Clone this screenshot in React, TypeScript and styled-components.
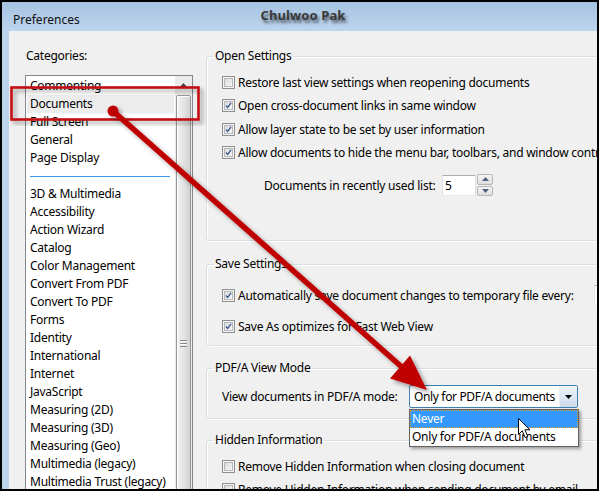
import React from "react";
import styled, { createGlobalStyle } from "styled-components";

const Global = createGlobalStyle`
  html, body { margin: 0; padding: 0; background: #fff; }
  body {
    font-family: "Noto Sans", "Open Sans", sans-serif;
    font-size: 12px;
    letter-spacing: -0.25px;
    color: #000;
  }
  * { box-sizing: border-box; }
`;

const Frame = styled.div`
  position: relative;
  width: 599px;
  height: 491px;
  border: 2px solid #000;
  display: flex;
  flex-direction: column;
  overflow: hidden;
`;

const TitleBar = styled.div`
  flex: none;
  height: 29px;
  display: grid;
  grid-template-columns: 1fr auto 1fr;
  align-items: start;
  padding-left: 11px;
  background: linear-gradient(#a7c3e2, #bdd5ed);
`;

const Caption = styled.div`
  margin-top: 10px;
  line-height: 16px;
  letter-spacing: 0;
  color: #111;
`;

const Owner = styled.div`
  margin-top: 5px;
  margin-right: 4px;
  line-height: 16px;
  font-size: 13px;
  font-weight: 700;
  letter-spacing: 0.1px;
  color: #3a3a3a;
  text-shadow: 2px 3px 3px rgba(0, 0, 0, 0.55);
`;

const Body = styled.div`
  flex: 1;
  display: flex;
  min-height: 0;
`;

const SideFrame = styled.div`
  flex: none;
  width: 7px;
  background: #bcd4ec;
`;

const Content = styled.div`
  flex: 1;
  display: flex;
  align-items: flex-start;
  padding-top: 17px;
  background: #f0f0f0;
  overflow: hidden;
`;

const LeftPane = styled.div`
  flex: none;
  width: 184px;
  padding-left: 16px;
  display: flex;
  flex-direction: column;
`;

const PaneLabel = styled.div`
  line-height: 16px;
  padding-left: 1px;
  margin-bottom: 11px;
`;

const ListBox = styled.div`
  width: 168px;
  height: 480px;
  border: 1px solid #828790;
  background: #fff;
  display: flex;
`;

const Items = styled.div`
  flex: 1;
  padding-top: 1px;
  display: flex;
  flex-direction: column;
`;

const Item = styled.div<{ $sel?: boolean }>`
  height: 18px;
  line-height: 18px;
  padding-left: 3px;
  margin: 0 1px;
  white-space: nowrap;
  background: ${(p) => (p.$sel ? "#ececec" : "transparent")};
`;

const Separator = styled.div`
  height: 18px;
  display: flex;
  align-items: center;
  padding: 0 5px 0 4px;
  &::after {
    content: "";
    flex: 1;
    height: 1px;
    background: #3c9ae8;
  }
`;

const ScrollBar = styled.div`
  flex: none;
  width: 17px;
  background: #ebebeb;
  display: flex;
  flex-direction: column;
  align-items: center;
`;

const ScrollBtn = styled.div`
  flex: none;
  height: 17px;
  width: 17px;
  display: flex;
  align-items: center;
  justify-content: center;
`;

const Thumb = styled.div`
  flex: none;
  margin-top: 2px;
  width: 15px;
  height: 500px;
  border: 1px solid #979797;
  border-radius: 2px;
  background: linear-gradient(90deg, #f3f3f3 0%, #e6e6e6 45%, #d2d2d2 100%);
  box-shadow: inset 1px 1px 0 #fff;
  display: flex;
  justify-content: center;
  padding-top: 244px;
`;

const Grip = styled.div`
  width: 7px;
  height: 7px;
  background: repeating-linear-gradient(#8a8a8a 0 1px, #fafafa 1px 2px, transparent 2px 3px);
`;

const RightPane = styled.div`
  flex: none;
  width: 560px;
  margin-left: 13px;
  display: flex;
  flex-direction: column;
`;

const Group = styled.fieldset<{ $mt: number; $pt: number; $pb: number }>`
  margin: ${(p) => p.$mt}px 0 0 0;
  padding: ${(p) => p.$pt}px 0 ${(p) => p.$pb}px 6px;
  border: 1px solid #d5dfe5;
  border-radius: 3px;
  box-shadow: inset 1px 1px 0 #fff, 1px 1px 0 #fff;
  min-width: 0;
`;

const Legend = styled.legend`
  padding: 0 2px;
  line-height: 16px;
`;

const Rows = styled.div`
  padding-left: 9px;
  display: flex;
  flex-direction: column;
`;

const CheckRow = styled.label<{ $h: number }>`
  height: ${(p) => p.$h}px;
  display: flex;
  align-items: center;
  gap: 2px;
  white-space: nowrap;
`;

const BoxWrap = styled.span`
  flex: none;
  width: 13px;
  height: 13px;
  border: 1px solid #8e8f8f;
  background: #f4f4f4;
  display: flex;
  align-items: center;
  justify-content: center;
  margin-right: 1px;
`;

const BoxInner = styled.span`
  width: 9px;
  height: 9px;
  border: 1px solid #b8b8b8;
  background: linear-gradient(135deg, #dcdcdc, #f6f6f6);
  display: flex;
  align-items: center;
  justify-content: center;
`;

const Check = ({ on }: { on?: boolean }) => (
  <BoxWrap>
    <BoxInner>
      {on && (
        <svg width="9" height="9" viewBox="0 0 9 9">
          <path d="M1.2 4.6 L3.4 6.9 L7.8 1.2" fill="none" stroke="#3d5a93" strokeWidth="1.8" />
        </svg>
      )}
    </BoxInner>
  </BoxWrap>
);

const SpinRow = styled.div`
  margin-top: 10px;
  margin-left: 42px;
  height: 22px;
  display: grid;
  grid-template-columns: 178px 35px auto;
  align-items: center;
`;

const TextBox = styled.div<{ $w: number }>`
  width: ${(p) => p.$w}px;
  height: 21px;
  border: 1px solid;
  border-color: #abadb3 #dbdfe6 #e3e9ef #e2e3ea;
  background: #fff;
  padding-left: 2px;
  line-height: 19px;
`;

const Spinner = styled.div`
  width: 16px;
  height: 22px;
  display: flex;
  flex-direction: column;
  gap: 1px;
`;

const SpinBtn = styled.div`
  flex: 1;
  border: 1px solid #b5b5b5;
  border-radius: 2px;
  background: linear-gradient(#f5f5f5, #dedede);
  display: flex;
  align-items: center;
  justify-content: center;
`;

const Tri = ({ up }: { up?: boolean }) => (
  <svg width="7" height="4" viewBox="0 0 7 4">
    <path d={up ? "M0 4 L3.5 0 L7 4 Z" : "M0 0 L7 0 L3.5 4 Z"} fill="#4d6185" />
  </svg>
);

const FieldRow = styled.div<{ $cols: string; $h: number }>`
  height: ${(p) => p.$h}px;
  display: grid;
  grid-template-columns: ${(p) => p.$cols};
  align-items: center;
  white-space: nowrap;
`;

const Combo = styled.div`
  position: relative;
  width: 169px;
  height: 23px;
  border: 1px solid #3c7fb1;
  border-radius: 2px;
  background: #fff;
  display: flex;
  align-items: stretch;
`;

const ComboText = styled.div`
  flex: 1;
  padding-left: 4px;
  line-height: 21px;
  letter-spacing: -0.35px;
  white-space: nowrap;
  overflow: hidden;
`;

const ComboBtn = styled.div`
  flex: none;
  width: 18px;
  background: linear-gradient(#eef4fa, #dce7f2 50%, #cddbea);
  border-left: 1px solid #eaf0f6;
  display: flex;
  align-items: center;
  justify-content: center;
`;

const DropList = styled.div`
  position: absolute;
  top: 23px;
  left: -1px;
  width: 170px;
  border: 1px solid #646464;
  background: #fff;
  box-shadow: 2px 2px 3px rgba(0, 0, 0, 0.35);
  z-index: 2;
`;

const DropItem = styled.div<{ $hl?: boolean }>`
  height: 18px;
  line-height: 18px;
  padding-left: 2px;
  white-space: nowrap;
  color: ${(p) => (p.$hl ? "#fff" : "#000")};
  background: ${(p) => (p.$hl ? "#3399ff" : "transparent")};
  outline: ${(p) => (p.$hl ? "1px dotted #e09a3a" : "none")};
  outline-offset: -1px;
`;

const Overlay = styled.svg`
  position: absolute;
  top: -2px;
  left: -2px;
  width: 599px;
  height: 491px;
  pointer-events: none;
  z-index: 5;
`;

const categoriesTop = ["Commenting", "Documents", "Full Screen", "General", "Page Display"];
const categoriesBottom = [
  "3D & Multimedia",
  "Accessibility",
  "Action Wizard",
  "Catalog",
  "Color Management",
  "Convert From PDF",
  "Convert To PDF",
  "Forms",
  "Identity",
  "International",
  "Internet",
  "JavaScript",
  "Measuring (2D)",
  "Measuring (3D)",
  "Measuring (Geo)",
  "Multimedia (legacy)",
  "Multimedia Trust (legacy)",
  "Multimedia & 3D",
];

export default function App() {
  return (
    <>
      <Global />
      <Frame>
        <TitleBar>
          <Caption>Preferences</Caption>
          <Owner>Chulwoo Pak</Owner>
          <span />
        </TitleBar>
        <Body>
          <SideFrame />
          <Content>
            <LeftPane>
              <PaneLabel>Categories:</PaneLabel>
              <ListBox>
                <Items>
                  {categoriesTop.map((c) => (
                    <Item key={c} $sel={c === "Documents"}>
                      {c}
                    </Item>
                  ))}
                  <Separator />
                  {categoriesBottom.map((c) => (
                    <Item key={c}>{c}</Item>
                  ))}
                </Items>
                <ScrollBar>
                  <ScrollBtn>
                    <svg width="7" height="4" viewBox="0 0 7 4">
                      <path d="M0 4 L3.5 0 L7 4 Z" fill="#404040" />
                    </svg>
                  </ScrollBtn>
                  <Thumb>
                    <Grip />
                  </Thumb>
                </ScrollBar>
              </ListBox>
            </LeftPane>

            <RightPane>
              <Group $mt={0} $pt={7} $pb={44}>
                <Legend>Open Settings</Legend>
                <Rows>
                  <CheckRow $h={23}>
                    <Check />
                    Restore last view settings when reopening documents
                  </CheckRow>
                  <CheckRow $h={23}>
                    <Check on />
                    Open cross-document links in same window
                  </CheckRow>
                  <CheckRow $h={24}>
                    <Check on />
                    Allow layer state to be set by user information
                  </CheckRow>
                  <CheckRow $h={23}>
                    <Check on />
                    Allow documents to hide the menu bar, toolbars, and window controls
                  </CheckRow>
                  <SpinRow>
                    <span>Documents in recently used list:</span>
                    <TextBox $w={34}>5</TextBox>
                    <Spinner>
                      <SpinBtn>
                        <Tri up />
                      </SpinBtn>
                      <SpinBtn>
                        <Tri />
                      </SpinBtn>
                    </Spinner>
                  </SpinRow>
                </Rows>
              </Group>

              <Group $mt={15} $pt={8} $pb={3}>
                <Legend>Save Settings</Legend>
                <Rows>
                  <FieldRow $cols="372px auto" $h={31}>
                    <CheckRow $h={31}>
                      <Check on />
                      Automatically save document changes to temporary file every:
                    </CheckRow>
                    <TextBox $w={40}>5</TextBox>
                  </FieldRow>
                  <CheckRow $h={31}>
                    <Check on />
                    Save As optimizes for Fast Web View
                  </CheckRow>
                </Rows>
              </Group>

              <Group $mt={14} $pt={9} $pb={10}>
                <Legend>PDF/A View Mode</Legend>
                <Rows>
                  <FieldRow $cols="187px auto" $h={23}>
                    <span>View documents in PDF/A mode:</span>
                    <Combo>
                      <ComboText>Only for PDF/A documents</ComboText>
                      <ComboBtn>
                        <svg width="7" height="4" viewBox="0 0 7 4">
                          <path d="M0 0 L7 0 L3.5 4 Z" fill="#000" />
                        </svg>
                      </ComboBtn>
                      <DropList>
                        <DropItem $hl>Never</DropItem>
                        <DropItem>Only for PDF/A documents</DropItem>
                      </DropList>
                    </Combo>
                  </FieldRow>
                </Rows>
              </Group>

              <Group $mt={13} $pt={7} $pb={10}>
                <Legend>Hidden Information</Legend>
                <Rows>
                  <CheckRow $h={23}>
                    <Check />
                    Remove Hidden Information when closing document
                  </CheckRow>
                  <CheckRow $h={23}>
                    <Check />
                    Remove Hidden Information when sending document by email
                  </CheckRow>
                </Rows>
              </Group>
            </RightPane>
          </Content>
        </Body>

        <Overlay viewBox="0 0 599 491">
          <defs>
            <filter id="sh" x="-20%" y="-20%" width="140%" height="140%">
              <feDropShadow dx="3" dy="3" stdDeviation="2.2" floodColor="#000" floodOpacity="0.35" />
            </filter>
          </defs>
          <rect x="11.5" y="87.5" width="187" height="32" fill="none" stroke="#c40d12" strokeWidth="2.6" filter="url(#sh)" />
          <g filter="url(#sh)">
            <line x1="113" y1="111" x2="404" y2="369" stroke="#bf0000" strokeWidth="5.5" strokeLinecap="round" />
            <circle cx="113" cy="111" r="5.5" fill="#bf0000" />
            <polygon points="427,390 390,378.5 410,355.5" fill="#bf0000" />
          </g>
          <path
            d="M518.5 418.5 L518.5 434.5 L522.2 430.8 L525.2 437.5 L527.8 436.4 L524.9 429.8 L530 429.8 Z"
            fill="#fff"
            stroke="#000"
            strokeWidth="1"
            strokeLinejoin="round"
          />
        </Overlay>
      </Frame>
    </>
  );
}
